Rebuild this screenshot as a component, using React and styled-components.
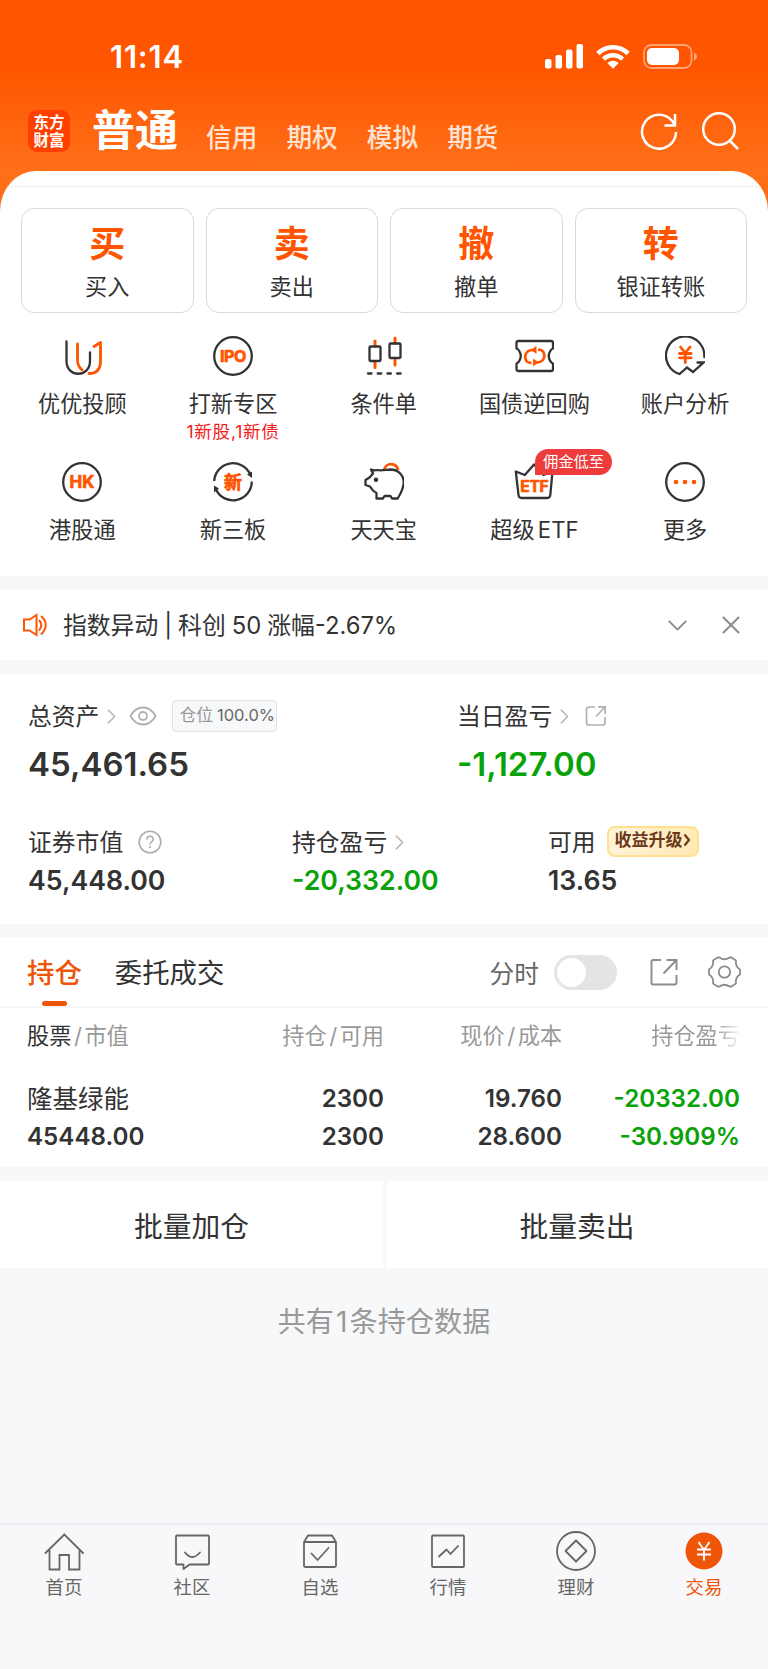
import React from 'react'
import styled, { createGlobalStyle } from 'styled-components';
import { ChevronRight, ChevronDown, X } from 'lucide-react';

const ORANGE = '#ff5500';
const DARK = '#333333';
const GREEN = '#09a309';

const GlobalStyle = createGlobalStyle`
  * {
    box-sizing: border-box;
  }
  body {
    margin: 0;
    background-color: #f7f8fa;
    color: ${DARK};
    font-family: Inter, "Noto Sans CJK SC", sans-serif;
  }
  svg {
    display: block;
    flex: none;
  }
`

const Page = styled.div`
  width: 768px;
  height: 1669px;
  display: flex;
  flex-direction: column;
  overflow: hidden;
  white-space: nowrap;
`

const Top = styled.div`
  background: linear-gradient(#ff5500 0, #ff5500 66px, #ff7019 172px, #ff6a12 215px);
`

const StatusBar = styled.div`
  height: 102px;
  padding: 10px 71px 0 110px;
  display: flex;
  align-items: center;
  justify-content: space-between;
  color: #fff;
`

const Clock = styled.span`
  font-size: 31px;
  font-weight: 600;
  letter-spacing: 0.8px;
`

const StatusIcons = styled.div`
  display: flex;
  align-items: center;
  gap: 13px;
`

const Header = styled.div`
  height: 69px;
  padding: 0 29px 0 28px;
  display: flex;
  align-items: flex-start;
`

const Logo = styled.div`
  width: 42px;
  height: 42px;
  margin-top: 8px;
  border-radius: 9px;
  background-color: #ff3f00;
  color: #fff;
  font-size: 15.5px;
  font-weight: 700;
  line-height: 17.5px;
  padding-top: 4px;
  text-align: center;
  white-space: normal;
`

const MainTab = styled.span`
  margin: 0 0 0 22px;
  width: 86px;
  color: #fff;
  font-size: 43px;
  font-weight: 700;
  line-height: 57px;
`

const SubTabs = styled.div`
  display: flex;
  gap: 29px;
  margin-left: 28px;
  padding-top: 18px;
`

const SubTab = styled.span`
  color: #ffe2d2;
  font-size: 25.7px;
  font-weight: 500;
  line-height: 36px;
`

const HeaderIcons = styled.div`
  display: flex;
  gap: 23px;
  margin-left: auto;
  padding-top: 10px;
`

const Sheet = styled.div`
  height: 405px;
  background-color: #fff;
  border-radius: 36px 36px 0 0 / 40px 40px 0 0;
  overflow: hidden;
`

const SheetLine = styled.div`
  height: 16px;
  border-bottom: 1px solid #eeeeee;
`

const Actions = styled.div`
  display: grid;
  grid-template-columns: repeat(4, 1fr);
  gap: 12px;
  padding: 21px 21px 0;
`

const ActionCard = styled.div`
  height: 105px;
  border: 1px solid #d9d9d9;
  border-radius: 13px;
  display: flex;
  flex-direction: column;
  align-items: center;
`

const ActionGlyph = styled.span`
  margin-top: 10px;
  color: ${ORANGE};
  font-size: 36px;
  font-weight: 700;
  line-height: 50px;
`

const ActionName = styled.span`
  margin-top: 3px;
  font-size: 22.2px;
  line-height: 30px;
`

const Services = styled.div`
  display: grid;
  grid-template-columns: repeat(5, 150.7px);
  grid-auto-rows: 126px;
  padding: 23px 0 0 7px;
`

const Service = styled.div`
  position: relative;
  display: flex;
  flex-direction: column;
  align-items: center;
`

const ServiceName = styled.span`
  margin-top: 13px;
  font-size: 22.2px;
  line-height: 30px;
  word-spacing: -3px;
`

const ServiceHint = styled.span`
  margin-top: 1px;
  font-size: 17.6px;
  line-height: 24px;
  letter-spacing: 0.7px;
  color: #f21d1d;
`

const Badge = styled.span`
  position: absolute;
  left: 76px;
  top: -13px;
  width: 77px;
  height: 26px;
  border-radius: 13px 13px 13px 1px;
  background-color: #ee3b3b;
  color: #fff;
  font-size: 15.3px;
  line-height: 25px;
  text-align: center;
`

const Notice = styled.div`
  margin-top: 14px;
  height: 70px;
  padding: 0 22px 0 22px;
  display: flex;
  align-items: center;
  background-color: #fff;
`

const NoticeText = styled.span`
  margin: -3px 0 0 15px;
  flex: 1;
  font-size: 23.8px;
  word-spacing: -0.7px;
`

const NoticeIcons = styled.div`
  display: flex;
  align-items: center;
  gap: 22px;
  color: #8c8c8c;
`

const Assets = styled.div`
  margin-top: 14px;
  height: 250px;
  padding: 25px 28px 0;
  background-color: #fff;
`

const AssetRow = styled.div`
  display: grid;
  grid-template-columns: ${p => p.$columns};
  height: ${p => p.$height};
`

const AssetLabel = styled.div`
  display: flex;
  align-items: center;
  height: 34px;
  font-size: 23.8px;
`

const LabelText = styled.span`
  margin-top: -4px;
`

const AssetValue = styled.div`
  margin-top: ${p => (p.$big ? '10px' : '1px')};
  font-size: ${p => (p.$big ? '33px' : '26.7px')};
  line-height: ${p => (p.$big ? '42px' : '40px')};
  font-weight: 600;
  color: ${p => (p.$down ? GREEN : DARK)};
`

const Position = styled.span`
  height: 32px;
  width: 105px;
  margin-left: 15px;
  padding-left: 6px;
  border: 1px solid #e3e4e8;
  border-radius: 4px;
  background-color: #f7f8fa;
  color: #999;
  font-size: 16.8px;
  line-height: 29px;
  b {
    margin-left: 4px;
    font-size: 16.5px;
    font-weight: 400;
    color: #666;
  }
`

const Upgrade = styled.span`
  display: flex;
  align-items: center;
  justify-content: center;
  width: 92px;
  height: 31px;
  margin: -2px 0 0 11px;
  border: 2px solid #ffe08c;
  border-radius: 8px;
  background: linear-gradient(100deg, #fff3d9, #ffe9b3);
  color: #6b3a1c;
  font-size: 17px;
  font-weight: 700;
  line-height: 24px;
  padding-bottom: 2px;
`

const Holdings = styled.div`
  margin-top: 13px;
  height: 230px;
  background-color: #fff;
`

const TabsRow = styled.div`
  height: 71px;
  padding: 0 27px;
  display: flex;
  border-bottom: 2px solid #f5f5f7;
`

const Tab = styled.div`
  position: relative;
  margin-right: 33px;
  font-size: 27.4px;
  font-weight: ${p => (p.$active ? 500 : 400)};
  line-height: 73px;
  color: ${p => (p.$active ? '#ee5507' : DARK)};
  &:after {
    content: "";
    display: ${p => (p.$active ? 'block' : 'none')};
    position: absolute;
    left: 15px;
    bottom: 0px;
    width: 25px;
    height: 5px;
    border-radius: 3px;
    background-color: #ee5507;
  }
`

const TabTools = styled.div`
  margin-left: auto;
  display: flex;
  align-items: center;
  font-size: 24.8px;
  color: #666;
`

const Toggle = styled.div`
  width: 63px;
  height: 35px;
  margin: 2px 33px 0 15px;
  padding: 3px;
  border-radius: 18px;
  background-color: #e4e4e7;
  &:before {
    content: "";
    display: block;
    width: 29px;
    height: 29px;
    border-radius: 50%;
    background-color: #fff;
  }
`

const Table = styled.div`
  display: grid;
  grid-template-columns: 168px 189px 178px 178px;
  padding-left: 27px;
`

const Cell = styled.div`
  text-align: ${p => (p.$left ? 'left' : 'right')};
  font-size: ${p => p.$size || '24.2px'};
  font-weight: ${p => (p.$light ? 400 : 600)};
  line-height: 38px;
  color: ${p => (p.$down ? GREEN : DARK)};
`

const HeadCell = styled(Cell)`
  height: 72px;
  padding-top: 9px;
  font-size: 22.2px;
  font-weight: 400;
  color: #999;
  b {
    font-weight: 400;
    color: ${DARK};
  }
  i {
    font-style: normal;
    margin: 0 2.5px;
  }
`

const Fade = styled.span`
  -webkit-mask-image: linear-gradient(90deg, #000 72%, transparent 102%);
  mask-image: linear-gradient(90deg, #000 72%, transparent 102%);
`

const Batch = styled.div`
  margin-top: 14px;
  display: grid;
  grid-template-columns: 383px 382px;
  gap: 3px;
`

const BatchButton = styled.div`
  height: 87px;
  background-color: #fff;
  font-size: 28.8px;
  line-height: 91px;
  text-align: center;
`

const Summary = styled.div`
  margin-top: 34px;
  flex: 1;
  font-size: 28.2px;
  line-height: 40px;
  text-align: center;
  color: #999;
  b {
    margin: 0 2px;
    font-weight: 400;
  }
`

const TabBar = styled.div`
  height: 146px;
  padding-top: 6px;
  display: grid;
  grid-template-columns: repeat(6, 1fr);
  border-top: 2px solid #ebecf1;
  background-color: #f8f8fa;
`

const TabItem = styled.div`
  display: flex;
  flex-direction: column;
  align-items: center;
  font-size: 18.4px;
  line-height: 26px;
  gap: 3px;
  color: ${p => (p.$active ? '#ee5507' : '#666')};
`

function Icon({ children, size = 40, color = DARK, width = 2.3 }) {
  return (
    <svg width={size} height={size} viewBox="0 0 40 40" fill="none" stroke={color} strokeWidth={width} strokeLinecap="round" strokeLinejoin="round">
      {children}
    </svg>
  )
}

function IconText({ children, size, y, x = 20, spacing = 0 }) {
  return (
    <text x={x} y={y} fontSize={size} fontWeight={700} letterSpacing={spacing} fill={ORANGE} stroke={ORANGE} strokeWidth=".7" textAnchor="middle">{children}</text>
  )
}

const services = [
  {
    name: '优优投顾',
    icon: <>
      <path d="M4.5 5.5V25c0 17 23.5 17 23.5 0v-8.500" />
      <path stroke={ORANGE} strokeWidth="2.8" d="M15.500 8v16q0 6 4.500 10M32 10.500l6.500-4V25q0 12.500-11.500 12.500" />
    </>,
  },
  {
    name: '打新专区',
    hint: '1新股,1新债',
    icon: <>
      <circle cx="20" cy="20" r="18.800" />
      <IconText size={16} y={26} spacing={-0.4}>IPO</IconText>
    </>,
  },
  {
    name: '条件单',
    icon: <>
      <path stroke={ORANGE} strokeWidth="3" d="M11 5v5M11 26.500v5M31 2v5M31 24v5" />
      <rect x="5.500" y="10.500" width="11" height="14.500" rx="1" />
      <rect x="25.500" y="7.500" width="11" height="14.500" rx="1" />
      <path d="M4 37.500h35" strokeDasharray="3.500 6.200" />
    </>,
  },
  {
    name: '国债逆回购',
    icon: <>
      <path d="M4.500 5H37q2 0 2 2v5.500q-2 .5-3 3-2.500 4.500 0 9 1 2.500 3 3V33q0 2-2 2H4.500q-2 0-2-2v-5.500q2-.5 3-3 2.500-4.500 0-9-1-2.500-3-3V7q0-2 2-2z" />
      <path stroke={ORANGE} strokeWidth="2.700" strokeLinecap="butt" d="M13 26C9 20 12 14 19 14h1M28.500 14.500C32.500 20.500 29.500 26.500 22.500 26.500h-1M12.500 25q1.500 2 5 1.800M29 15.500q-1.500-1.800-5-1.800" />
      <path fill={ORANGE} stroke="none" d="M16.500 14l6-4v7.800zM25 26.500l-6-4v7.800z" />
    </>,
  },
  {
    name: '账户分析',
    icon: <>
      <path strokeLinejoin="miter" d="M39.300 21A19.200 19.200 0 1 0 14.500 38L22 31.500l6 4.500 10.500-9.500H32.500" />
      <path stroke={ORANGE} strokeWidth="2.800" d="M15.500 11l4.800 6 4.800-6M20.300 17v9.500M14.500 17.500h11.600M14.500 21.800h11.600" />
    </>,
  },
  {
    name: '港股通',
    icon: <>
      <circle cx="20" cy="20" r="18.800" />
      <IconText size={17} y={26.200}>HK</IconText>
    </>,
  },
  {
    name: '新三板',
    icon: <>
      <path strokeLinecap="butt" d="M1.200 19A18.800 18.800 0 0 1 37 12M38.800 19.500A18.800 18.800 0 0 1 3 27.500" />
      <path fill={DARK} stroke="none" d="M34 12.500l5-3v6.500zM1 30.500V23.500l5 3z" />
      <IconText size={18} y={26.500}>新</IconText>
    </>,
  },
  {
    name: '天天宝',
    icon: <>
      <path stroke={ORANGE} strokeWidth="2.800" strokeLinecap="butt" d="M20.500 7.500c1-7 12-7.500 13.500.5" />
      <path d="M7 7.500q3 1.500 6.500.5c3 .8 7 0 13-.500 8 0 13.500 6 13.200 13.500q-.5 6.500-6 15.500H28l-1.500-2.500h-6l-1.500 2.500h-6.500v-5.500q-4-2-6.500-6.500L1.500 23v-5l4-2.500L9 11.500z" />
      <circle cx="12" cy="17.700" r="2.200" fill={DARK} stroke="none" />
    </>,
  },
  {
    name: <>超级 ETF</>,
    id: 'etf',
    badge: '佣金低至',
    icon: <>
      <path d="M1.800 9.500l9 3.500L20 2.500 29.500 13l9-3.500L36.300 33q-.3 3-3 3H7.500q-2.700 0-3-3z" />
      <IconText size={15.500} y={29.500} x={20.300} spacing={-0.3}>ETF</IconText>
    </>,
  },
  {
    name: '更多',
    icon: <>
      <circle cx="20" cy="20" r="18.800" />
      <g fill={ORANGE} stroke="none">
        <circle cx="11" cy="20" r="2.300" />
        <circle cx="20" cy="20" r="2.300" />
        <circle cx="29" cy="20" r="2.300" />
      </g>
    </>,
  },
]

const actions = [
  ['买', '买入'],
  ['卖', '卖出'],
  ['撤', '撤单'],
  ['转', '银证转账'],
]

const tabItems = [
  {
    name: '首页',
    icon: <path strokeLinejoin="miter" d="M1.500 22L20.300 3.500 39 22M5.500 18.500v20h10V24H25v14.500h10.500v-20" />,
  },
  {
    name: '社区',
    icon: <path d="M5 4.500h31q1 0 1 1V32.500q0 1-1 1H17.500l-6 4.500v-4.500H5q-1 0-1-1V5.500q0-1 1-1zM13 21.500q7 9 15 0" />,
  },
  {
    name: '自选',
    icon: <path d="M4 11l4-6.500h24l4 6.500v23.500q0 1.500-1.500 1.500h-29q-1.500 0-1.500-1.500zM4 11h32M11.500 22.500l6 6.500 11-12" />,
  },
  {
    name: '行情',
    icon: <path d="M5 4.500h30q1 0 1 1V35q0 1-1 1H5q-1 0-1-1V5.500q0-1 1-1zM11 25.500l7.500-7 4 4.500 7.500-8" />,
  },
  {
    name: '理财',
    icon: <><circle cx="20" cy="20" r="19" /><path d="M20 9.500L30.500 20 20 30.500 9.500 20z" /></>,
  },
  {
    name: '交易',
    active: true,
    icon: <>
      <circle cx="20" cy="20" r="18.500" fill="#ee5507" stroke="none" />
      <path stroke="#fff" strokeWidth="1.900" strokeLinecap="butt" d="M14.500 11l5.500 8 5.500-8M20 19v10.500M13 18.500h14M13 23.500h14" />
    </>,
  },
]

function Arrow() {
  return <ChevronRight size={25} strokeWidth={1.6} color="#b5b5b5" />
}

export default function App() {
  return (
    <Page>
      <GlobalStyle />
      <Top>
        <StatusBar>
          <Clock>11:14</Clock>
          <StatusIcons>
            <svg width="38" height="25" viewBox="0 0 38 25" fill="#fff">
              <rect x="0" y="15" width="6.500" height="9.500" rx="2" />
              <rect x="10.500" y="11" width="6.500" height="13.500" rx="2" />
              <rect x="21" y="5.500" width="6.500" height="19" rx="2" />
              <rect x="31.500" y="0" width="6.500" height="24.500" rx="2" />
            </svg>
            <svg width="34" height="25" viewBox="0 0 34 25" fill="none" stroke="#fff" strokeWidth="4.600">
              <path d="M1.800 9.500a21.500 21.500 0 0 1 30.400 0" />
              <path d="M7.500 15.200a13.500 13.500 0 0 1 19 0" />
              <path fill="#fff" stroke="none" d="M17 24.800l-5.700-5.800q5.700-4.600 11.400 0z" />
            </svg>
            <svg width="54" height="25" viewBox="0 0 54 25">
              <rect x="1" y="1" width="47.500" height="23" rx="7.500" fill="none" stroke="#fff" strokeOpacity=".45" strokeWidth="1.800" />
              <rect x="4" y="4" width="32" height="17" rx="5" fill="#fff" />
              <path d="M51 8.500q3 1.500 3 4t-3 4z" fill="#fff" fillOpacity=".5" />
            </svg>
          </StatusIcons>
        </StatusBar>
        <Header>
          <Logo>东方<br />财富</Logo>
          <MainTab>普通</MainTab>
          <SubTabs>
            <SubTab>信用</SubTab>
            <SubTab>期权</SubTab>
            <SubTab>模拟</SubTab>
            <SubTab>期货</SubTab>
          </SubTabs>
          <HeaderIcons>
            <svg width="38" height="38" viewBox="0 0 38 38" fill="none" stroke="#fff" strokeWidth="2.500">
              <path d="M36 20A17 17 0 1 1 32.200 9L34.700 12.500M35 2v11.500H24.500" />
            </svg>
            <svg width="38" height="38" viewBox="0 0 38 38" fill="none" stroke="#fff" strokeWidth="2.500">
              <circle cx="18" cy="17" r="15.800" />
              <path d="M28.500 28.500l8.500 8.500" />
            </svg>
          </HeaderIcons>
        </Header>
        <Sheet>
          <SheetLine />
          <Actions>
            {actions.map(([glyph, name]) => (
              <ActionCard key={name}>
                <ActionGlyph>{glyph}</ActionGlyph>
                <ActionName>{name}</ActionName>
              </ActionCard>
            ))}
          </Actions>
          <Services>
            {services.map(item => (
              <Service key={item.id || item.name}>
                <Icon>{item.icon}</Icon>
                {item.badge && <Badge>{item.badge}</Badge>}
                <ServiceName>{item.name}</ServiceName>
                {item.hint && <ServiceHint>{item.hint}</ServiceHint>}
              </Service>
            ))}
          </Services>
        </Sheet>
      </Top>

      <Notice>
        <svg width="26" height="24" viewBox="0 0 26 24" fill="none" stroke={ORANGE} strokeWidth="2">
          <path d="M2 6.500h5.500l7-4.500v20l-7-4.500H2zM17 7q4.500 5 0 10.500M19 3q9.500 8.500 0 18.500" />
        </svg>
        <NoticeText>指数异动 | 科创 50 涨幅-2.67%</NoticeText>
        <NoticeIcons>
          <ChevronDown size={33} strokeWidth={1.4} />
          <X size={30} strokeWidth={1.6} />
        </NoticeIcons>
      </Notice>

      <Assets>
        <AssetRow $columns="429px 1fr" $height="126px">
          <div>
            <AssetLabel>
              <LabelText>总资产</LabelText><Arrow />
              <svg width="28" height="20" viewBox="0 0 28 20" fill="none" stroke="#b0b0b0" strokeWidth="1.800" style={{ marginLeft: 5 }}>
                <path d="M1.500 10Q6 1.500 14 1.500T26.500 10Q22 18.500 14 18.500T1.500 10z" />
                <circle cx="14" cy="10" r="4" />
              </svg>
              <Position>仓位<b>100.0%</b></Position>
            </AssetLabel>
            <AssetValue $big>45,461.65</AssetValue>
          </div>
          <div>
            <AssetLabel>
              <LabelText>当日盈亏</LabelText><Arrow />
              <svg width="22" height="22" viewBox="0 0 22 22" fill="none" stroke="#b0b0b0" strokeWidth="1.700" style={{ marginLeft: 8 }}>
                <path d="M10 2H4Q1.500 2 1.500 4.500v13Q1.500 20 4 20h13.500q2.500 0 2.500-2.500V12M13 1.800h7.200V9M20 2l-9 9.500" />
              </svg>
            </AssetLabel>
            <AssetValue $big $down>-1,127.00</AssetValue>
          </div>
        </AssetRow>
        <AssetRow $columns="264px 256px 1fr" $height="90px">
          <div>
            <AssetLabel>
              <LabelText>证券市值</LabelText>
              <svg width="24" height="24" viewBox="0 0 24 24" fill="none" stroke="#adadad" strokeWidth="1.600" style={{ marginLeft: 15 }}>
                <circle cx="12" cy="12" r="10.800" />
                <path d="M8.800 9.500q0-3.300 3.200-3.300t3.200 3q0 1.500-1.700 2.600-1.500 1-1.500 2.700M12 16v2" />
              </svg>
            </AssetLabel>
            <AssetValue>45,448.00</AssetValue>
          </div>
          <div>
            <AssetLabel><LabelText>持仓盈亏</LabelText><Arrow /></AssetLabel>
            <AssetValue $down>-20,332.00</AssetValue>
          </div>
          <div>
            <AssetLabel>
              <LabelText>可用</LabelText>
              <Upgrade>
                收益升级
                <svg width="8" height="14" viewBox="0 0 8 14" fill="none" stroke="#6b3a1c" strokeWidth="2.200">
                  <path d="M1.500 1.500L6 7l-4.500 5.500" />
                </svg>
              </Upgrade>
            </AssetLabel>
            <AssetValue>13.65</AssetValue>
          </div>
        </AssetRow>
      </Assets>

      <Holdings>
        <TabsRow>
          <Tab $active>持仓</Tab>
          <Tab>委托成交</Tab>
          <TabTools>
            分时
            <Toggle />
            <svg width="28" height="28" viewBox="0 0 28 28" fill="none" stroke="#8c8c8c" strokeWidth="1.900">
              <path d="M11 2H3Q1.500 2 1.500 3.500v22Q1.500 26.500 3 26.500h22q1.500 0 1.500-1.500V17M16.500 2h10v10M26 2.500L13.500 15.500" />
            </svg>
            <svg width="33" height="32" viewBox="0 0 33 32" fill="none" stroke="#8c8c8c" strokeWidth="1.800" strokeLinejoin="round" style={{ marginLeft: 30 }}>
              <path d="M9.500 1.500h2q5 3.500 10 0h2l4.500 3q-1 6 4 9v5q-5 3-4 9l-4.500 3h-2q-5-3.500-10 0h-2l-4.500-3q1-6-4-9v-5q5-3 4-9z" />
              <circle cx="16.500" cy="16" r="5.700" />
            </svg>
          </TabTools>
        </TabsRow>
        <Table>
          <HeadCell $left><b>股票</b><i>/</i>市值</HeadCell>
          <HeadCell>持仓<i>/</i>可用</HeadCell>
          <HeadCell>现价<i>/</i>成本</HeadCell>
          <HeadCell><Fade>持仓盈亏</Fade></HeadCell>
          <Cell $left $light $size="25.500px">隆基绿能</Cell>
          <Cell>2300</Cell>
          <Cell>19.760</Cell>
          <Cell $down>-20332.00</Cell>
          <Cell $left>45448.00</Cell>
          <Cell>2300</Cell>
          <Cell>28.600</Cell>
          <Cell $down>-30.909%</Cell>
        </Table>
      </Holdings>

      <Batch>
        <BatchButton>批量加仓</BatchButton>
        <BatchButton>批量卖出</BatchButton>
      </Batch>
      <Summary>共有<b>1</b>条持仓数据</Summary>

      <TabBar>
        {tabItems.map(item => (
          <TabItem key={item.name} $active={item.active}>
            <Icon color="#666" width={1.8}>{item.icon}</Icon>
            {item.name}
          </TabItem>
        ))}
      </TabBar>
    </Page>
  )
}
